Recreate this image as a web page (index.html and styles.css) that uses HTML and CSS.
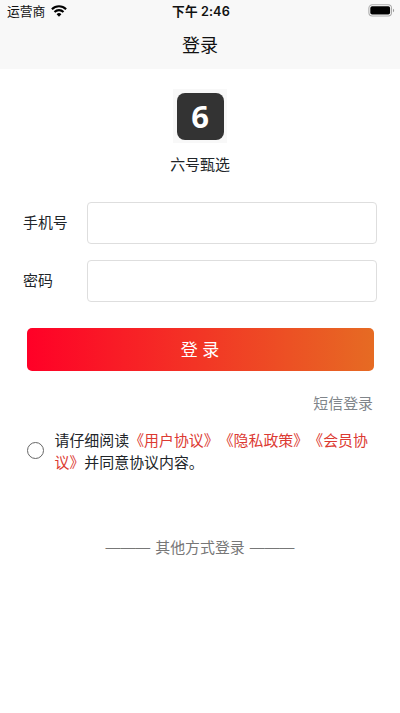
FILE: index.html
```html
<!DOCTYPE html>
<html lang="zh-CN">
<head>
<meta charset="utf-8">
<meta name="viewport" content="width=device-width, initial-scale=1">
<title>登录</title>
<link rel="stylesheet" href="styles.css">
</head>
<body>
<header class="top">
  <div class="status">
    <div class="carrier"><span>运营商</span>
      <svg class="wifi" width="16" height="12" viewBox="0 0 16 12" fill="none" stroke="#000" stroke-width="2.1"><path d="M.9 4.2a10.2 10.2 0 0 1 14.2 0M3.5 7a6.4 6.4 0 0 1 9 0"/><path d="M8 11.7 5.6 9.3a3.4 3.4 0 0 1 4.8 0z" fill="#000" stroke="none"/></svg>
    </div>
    <div class="time">下午 2:46</div>
    <svg class="battery" width="27" height="13" viewBox="0 0 27 13"><rect x=".9" y=".8" width="22.6" height="11.2" rx="3.4" fill="#fff" stroke="#aaa" stroke-width="1.1"/><rect x="2.3" y="2.2" width="19.8" height="8.4" rx="1.8"/><path d="M25 4.7c1.5.7 1.5 2.9 0 3.6z" fill="#999"/></svg>
  </div>
  <h1 class="title">登录</h1>
</header>
<main>
  <div class="brand">
    <div class="logo-frame"><div class="logo">6</div></div>
    <div class="name">六号甄选</div>
  </div>
  <form>
    <div class="field"><label for="phone">手机号</label><input id="phone" type="tel"></div>
    <div class="field"><label for="password">密码</label><input id="password" type="password"></div>
    <button class="submit" type="button">登 录</button>
    <a class="sms">短信登录</a>
    <div class="agreement">
      <span class="radio"></span>
      <p>请仔细阅读<a>《用户协议》</a><a>《隐私政策》</a><a>《会员协议》</a>并同意协议内容。</p>
    </div>
  </form>
  <div class="other"><span class="dash">———</span><span>其他方式登录</span><span class="dash">———</span></div>
</main>
</body>
</html>
```
FILE: styles.css
```css
* { box-sizing: border-box; }
body {
  margin: 0;
  background: #fff;
  color: #212529;
  font: 14.93px/22px "Liberation Sans", "Noto Sans CJK SC", sans-serif;
}
.top { height: 69px; background: #f8f8f8; }
.status {
  display: grid;
  grid-template-columns: 1fr auto 1fr;
  align-items: center;
  height: 22px;
  padding: 0 5px 0 7px;
  color: #111;
  font-size: 12.8px;
  line-height: 20px;
}
.carrier { display: flex; align-items: center; gap: 6px; }
.carrier span { padding-top: 1px; }
.time { padding-top: 1px; font-family: Inter, "Noto Sans CJK SC", sans-serif; font-size: 12.7px; font-weight: 600; letter-spacing: .1px; }
.battery { justify-self: end; margin-bottom: 1px; }
.title { margin: 10px 0 0; text-align: center; font-size: 18px; line-height: 28px; font-weight: 400; color: #111; }
.brand { display: flex; flex-direction: column; align-items: center; padding-top: 20px; }
.logo-frame { display: grid; place-items: center; width: 54px; height: 54px; background: #f8f8f8; }
.logo {
  width: 47px;
  height: 47px;
  border-radius: 8px;
  background: #333;
  color: #fff;
  font: 700 31px/46px "Open Sans", sans-serif;
  text-align: center;
}
.name { margin-top: 11px; }
form { padding: 26px 23px 0; }
.field { display: flex; align-items: center; height: 42px; margin-bottom: 16px; }
.field label { width: 64px; }
.field input {
  width: 290px;
  height: 42px;
  padding: 0 12px;
  border: 1px solid #dedede;
  border-radius: 4px;
  background: #fff;
  outline: none;
}
.submit {
  display: block;
  width: 347px;
  height: 43px;
  margin: 26px 0 0 3.5px;
  padding: 3px 0 0;
  border: 0;
  border-radius: 5px;
  background: linear-gradient(90deg, #ff0027, #e66b23);
  color: #fff;
  font: 17px/40px "Liberation Sans", "Noto Sans CJK SC", sans-serif;
}
.sms { display: block; margin: 22px 4px 0 0; text-align: right; color: #80858a; }
.agreement { display: flex; align-items: center; gap: 11px; margin-top: 15px; padding-left: 3.5px; }
.radio { flex: none; width: 17px; height: 17px; margin-bottom: 3px; border: 1px solid #666; border-radius: 50%; }
.agreement p { width: 316px; margin: 0; word-break: break-all; text-spacing-trim: space-all; }
.agreement a { color: #dc3a32; }
.other { display: flex; justify-content: center; gap: 5px; margin-top: 63px; color: #777; }
.dash { margin-top: -1px; }
```
